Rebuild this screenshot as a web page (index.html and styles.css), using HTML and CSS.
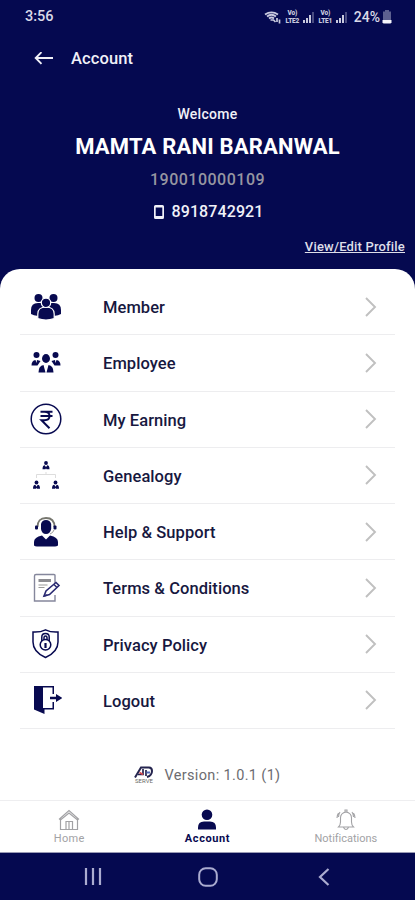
FILE: index.html
```html
<!DOCTYPE html>
<html lang="en">
<head>
<meta charset="utf-8">
<title>Account</title>
<link rel="stylesheet" href="styles.css">
</head>
<body>
<div class="screen">
  <header class="status">
    <span class="clock">3:56</span>
    <div class="signals">
      <svg class="wifi" width="17" height="14" viewBox="0 0 17 14" fill="none" stroke="currentColor"><path d="M1 4.600Q7.500 0 14 4.600M3 6.500Q7.500 3 12 6.500M5 8.500Q7.500 6.500 10 8.500" stroke-width="1.800"/><path d="M6.500 10h3l2 2M13 8v4M15.500 9.500v4" stroke-width="1.700"/></svg>
      <span class="volte"><span>Vo)</span><span>LTE2</span></span>
      <svg class="bars" width="12" height="12" viewBox="0 0 12 12" fill="currentColor"><path d="M0 9h2v3H0zM3 7h2v5H3zM6 4h2v8H6z"/><path d="M9 1h2v11H9z" opacity=".35"/></svg>
      <span class="volte"><span>Vo)</span><span>LTE1</span></span>
      <svg class="bars" width="12" height="12" viewBox="0 0 12 12" fill="currentColor"><path d="M0 9h2v3H0zM3 7h2v5H3zM6 4h2v8H6z"/><path d="M9 1h2v11H9z" opacity=".35"/></svg>
      <span class="battery-text">24%</span>
      <svg width="10" height="14" viewBox="0 0 10 14"><path d="M3 0h4v1.500h2V10H1V1.500h2z" fill="#5d6090"/><path d="M.5 10h9v2.500l-1 1h-7l-1-1z" fill="#f4f4fa"/></svg>
    </div>
  </header>
  <div class="appbar">
    <svg width="20" height="14" viewBox="0 0 20 14" fill="none" stroke="currentColor" stroke-width="1.900"><path d="M19 6H2M7.500 .2L1.700 6l5.800 5.800"/></svg>
    <span class="title">Account</span>
  </div>
  <section class="profile">
    <div class="welcome">Welcome</div>
    <h1 class="name">MAMTA RANI BARANWAL</h1>
    <div class="member-id">190010000109</div>
    <div class="phone"><svg width="10" height="15" viewBox="0 0 10 15"><path fill="currentColor" fill-rule="evenodd" d="M1.500 0h7Q10 0 10 1.500v11Q10 14 8.500 14h-7Q0 14 0 12.500v-11Q0 0 1.500 0zM1.700 2.500v8.500h6.600v-8.500z"/></svg><span>8918742921</span></div>
    <a class="edit">View/Edit Profile</a>
  </section>
  <main class="card">
    <ul class="menu">
      <li class="row">
        <svg class="icon" viewBox="0 0 32 32" fill="currentColor"><circle cx="8.500" cy="7" r="4"/><circle cx="23.500" cy="7" r="4"/><path d="M1 23v-4q0-7 7-7h16q7 0 7 7v4q-5 3-10 1H11q-5 2-10-1z"/><g stroke="#fff" stroke-width="1.200"><path d="M7.800 27.500v-4.500q0-7 8.200-7t8.200 7v4.500q-8.200 3-16.400 0z"/><circle cx="16" cy="11.800" r="4.700"/></g></svg>
        <span class="label">Member</span><svg class="chevron" viewBox="0 0 12 20"><path d="M1 1l9 9-9 9"/></svg>
      </li>
      <li class="row">
        <svg class="icon" viewBox="0 0 32 32" fill="currentColor"><circle cx="6.500" cy="8" r="3"/><circle cx="25.500" cy="8" r="3"/><ellipse cx="16" cy="11.500" rx="4" ry="4.400"/><path d="M1.500 18.500q0-5 4-5.500l1 3 .5-3 3.500 1-3 4.500zM30.500 18.500q0-5-4-5.500l-1 3-.5-3-3.500 1 3 4.500zM8.500 25.500q0-7 5-7.500l2 7.500zM23.500 25.500q0-7-5-7.500l-2 7.500z"/></svg>
        <span class="label">Employee</span><svg class="chevron" viewBox="0 0 12 20"><path d="M1 1l9 9-9 9"/></svg>
      </li>
      <li class="row">
        <svg class="icon" viewBox="0 0 32 32" fill="none" stroke="currentColor"><circle cx="16" cy="16" r="14.800" stroke-width="1.500"/><path d="M10.500 8.800h12M10.500 13h12M10.500 8.800h4q5 0 5 4.200t-5 4.200h-3l8 8" stroke-width="2"/></svg>
        <span class="label">My Earning</span><svg class="chevron" viewBox="0 0 12 20"><path d="M1 1l9 9-9 9"/></svg>
      </li>
      <li class="row">
        <svg class="icon" viewBox="0 0 32 32" fill="currentColor"><path d="M6.500 19v-3.500h19V19M16 13v2.500" fill="none" stroke="#ddd"/><g id="person"><circle cx="16" cy="4" r="1.900"/><path d="M12.500 10.300q0-4 2.300-4l1.200 2 1.200-2q2.300 0 2.300 4h-3l-.5-1-.5 1z"/></g><use href="#person" x="-9.500" y="19.500"/><use href="#person" x="9.500" y="19.500"/></svg>
        <span class="label">Genealogy</span><svg class="chevron" viewBox="0 0 12 20"><path d="M1 1l9 9-9 9"/></svg>
      </li>
      <li class="row">
        <svg class="icon" viewBox="0 0 32 32" fill="currentColor"><path d="M7.500 11Q7.500 2 16 2t8.500 9" fill="none" stroke="#77776f" stroke-width="1.800"/><rect x="5" y="9.500" width="3" height="4" rx="1"/><rect x="23.500" y="9.500" width="3" height="4" rx="1"/><path d="M11 8q1-4 5-4t5.200 4v5q-1 5-5.200 5T11 13z"/><path d="M24 14q-1 3-4 4" fill="none" stroke="#999"/><path d="M4 29.500v-3.500q0-5 8-6.500l4 4 4-4q8 1.500 8 6.500v3.500q-1.500 1-3 1H7q-2 0-3-1z"/></svg>
        <span class="label">Help &amp; Support</span><svg class="chevron" viewBox="0 0 12 20"><path d="M1 1l9 9-9 9"/></svg>
      </li>
      <li class="row">
        <svg class="icon" viewBox="0 0 32 32" fill="none"><path d="M25 12V3.500q0-1-1-1H6q-1.500 0-1.500 1.500v25H25V23" stroke="#85879c" stroke-width="1.400"/><path d="M8.500 8.500h12.500" stroke="#8c8c91" stroke-width="3"/><path d="M8.500 13h9M8.500 15.500h6" stroke="#999" stroke-width="1.200"/><path d="M14 24l2-5 10-8.500 3 3-9.500 9z" fill="#fff" stroke="#2a2a72" stroke-width="1.600"/><path d="M24 12.500l3 3M14 24l3-1" stroke="#2a2a72" stroke-width="1.500"/></svg>
        <span class="label">Terms &amp; Conditions</span><svg class="chevron" viewBox="0 0 12 20"><path d="M1 1l9 9-9 9"/></svg>
      </li>
      <li class="row">
        <svg class="icon" viewBox="0 0 32 32" fill="none" stroke="currentColor" stroke-width="1.500"><path d="M15.500 1.800Q10 4.500 3 4v10q0 10 12.500 15.500Q28 24 28 14V4q-7 .5-12.500-2.200z"/><circle cx="15.500" cy="16.800" r="5.300"/><path d="M11.800 13V9q0-3.500 3.700-3.500T19.200 9v4M14 12V9.500q0-1.500 1.500-1.500T17 9.500V12"/><path d="M15.500 15v5" stroke-width="2.200"/></svg>
        <span class="label">Privacy Policy</span><svg class="chevron" viewBox="0 0 12 20"><path d="M1 1l9 9-9 9"/></svg>
      </li>
      <li class="row">
        <svg class="icon" viewBox="0 0 32 32" fill="currentColor"><path d="M4 2h20v8h-1.500V3.500H13V24h9.500v-6H24v7.500H14.500V30L4 25.500z"/><path d="M20 12.700h6V10l6.500 4-6.500 4v-2.700h-6z"/></svg>
        <span class="label">Logout</span><svg class="chevron" viewBox="0 0 12 20"><path d="M1 1l9 9-9 9"/></svg>
      </li>
    </ul>
    <div class="version">
      <span class="logo"><svg width="19" height="12" viewBox="0 0 19 12" fill="none" stroke-width="2"><path d="M1 11.500L7 1.500h8q3 0 3 3.500 0 4.500-5 6" stroke="#25254f"/><path d="M4 8.500h5L9 3M12 4v6" stroke="#25254f" stroke-width="1.700"/><path d="M5.500 6.500L9 8.500" stroke="#d1484e"/><path d="M12.500 6.500h3.500" stroke="#4c66b5"/></svg><span class="logo-text">SERVE</span></span>
      <span>Version: 1.0.1 (1)</span>
    </div>
  </main>
  <nav class="tabs">
    <div class="tab"><svg width="22" height="22" viewBox="0 0 22 22" fill="none" stroke="currentColor" stroke-width="1.200"><path d="M2.500 9v11.500h17V9M1.500 10L11 1.500l9.500 8.500-1 1L11 4l-8.500 7zM8 20V12.500h6.500V20M11 13v7"/></svg><span>Home</span></div>
    <div class="tab active"><svg width="22" height="22" viewBox="0 0 22 22" fill="currentColor"><circle cx="11" cy="5.700" r="5.300"/><path d="M2 20.500v-2q0-6 6-6h6q6 0 6 6v2z"/></svg><span>Account</span></div>
    <div class="tab"><svg width="22" height="22" viewBox="0 0 22 22" fill="none" stroke="currentColor" stroke-width="1.100"><path d="M3.500 18q2-2 2-5V9q0-5 5.500-6 5.500 1 5.500 6v4q0 3 2 5zM10 3V1h2v2M8.500 18.500q2.500 4 5 0M3.500 4Q2 6 2 9M18.500 4Q20 6 20 9M5 3Q3.500 5 3.500 8M17 3q1.500 2 1.500 5"/></svg><span class="wide">Notifications</span></div>
  </nav>
  <footer class="system">
    <svg width="18" height="18" viewBox="0 0 18 18" stroke="currentColor" stroke-width="2.200"><path d="M2 0v17M9 0v17M16 0v17"/></svg>
    <svg width="20" height="20" viewBox="0 0 20 20" fill="none" stroke="currentColor" stroke-width="2"><rect x="1.200" y="1.200" width="17.600" height="17.600" rx="6.500"/></svg>
    <svg width="12" height="18" viewBox="0 0 12 18" fill="none" stroke="currentColor" stroke-width="2.200"><path d="M10.500 1L2 9l8.500 8"/></svg>
  </footer>
</div>
</body>
</html>
```
FILE: styles.css
```css
* { box-sizing: border-box; }
body { margin: 0; font-family: Roboto, "Liberation Sans", sans-serif; background: #050950; }
svg { display: block; flex: none; }
.screen { width: 415px; height: 900px; display: flex; flex-direction: column; color: #f1f1f8; }
.status { height: 33px; display: flex; align-items: center; justify-content: space-between; padding: 0 23px 0 25px; }
.clock { font-size: 14.5px; font-weight: 500; color: #dadae8; }
.signals { display: flex; align-items: center; gap: 3px; color: #c9cadf; }
.wifi { margin-right: 1px; }
.volte { display: flex; flex-direction: column; width: 15px; font-size: 6.5px; line-height: 8px; font-weight: 900; letter-spacing: -0.2px; text-align: center; }
.battery-text { font-size: 14px; font-weight: 500; color: #dadae8; margin-left: 3px; margin-right: -1px; }
.appbar { height: 51px; display: flex; align-items: center; gap: 17px; padding: 0 34px; }
.title { font-size: 16.5px; font-weight: 500; letter-spacing: 0.1px; }
.profile { height: 185px; display: flex; flex-direction: column; align-items: center; padding-top: 20px; }
.welcome { font-size: 14px; line-height: 20px; font-weight: 500; letter-spacing: 0.3px; }
.name { margin: 9px 0 0; font-size: 22px; line-height: 28px; font-weight: 700; letter-spacing: 0.2px; color: #fff; white-space: nowrap; }
.member-id { margin-top: 9px; font-size: 16px; line-height: 20px; font-weight: 500; letter-spacing: 0.5px; color: #9696a1; }
.phone { display: flex; align-items: center; gap: 8px; margin: 12px 0 0 2px; font-size: 16px; line-height: 20px; font-weight: 500; letter-spacing: 0.1px; }
.edit { align-self: flex-end; margin: 17px 10px 0 0; font-size: 13px; line-height: 16px; font-weight: 500; letter-spacing: 0.18px; text-decoration: underline; color: #dedee9; }
.card { height: 531px; background: #fff; border-radius: 20px 20px 0 0; padding: 10px 20px 0; }
.menu { list-style: none; margin: 0; padding: 0; }
.row { height: 56.25px; display: flex; align-items: center; border-bottom: 1px solid #ededef; padding: 0 18px 0 10px; color: #080a50; }
.icon { width: 32px; height: 32px; }
.label { flex: 1; margin-left: 41px; padding-top: 2px; font-size: 16.5px; font-weight: 500; letter-spacing: 0.07px; color: #17183f; }
.chevron { width: 12px; height: 20px; fill: none; stroke: #c0c0c0; stroke-width: 1.9; }
.version { display: flex; align-items: center; justify-content: center; gap: 11px; margin-top: 36px; height: 20px; font-size: 14.5px; letter-spacing: 0.35px; color: #6c6c70; }
.logo { display: flex; flex-direction: column; align-items: center; }
.logo-text { font-size: 6px; line-height: 6px; letter-spacing: 0; color: #666; }
.tabs { height: 53px; flex: none; display: grid; grid-template-columns: repeat(3, 1fr); background: #fff; border-top: 1px solid #eeeef0; border-bottom: 1px solid #9a9bb5; }
.tab { display: flex; flex-direction: column; align-items: center; padding-top: 8px; gap: 1px; font-size: 11px; line-height: 13px; letter-spacing: 0.25px; color: #a2a2a5; }
.wide { letter-spacing: -0.02px; }
.active { color: #080a50; font-weight: 700; letter-spacing: 0.6px; }
.system { height: 47px; display: grid; grid-template-columns: repeat(3, 1fr); place-items: center; padding: 0 33px 0 35px; color: #abacd0; }
```
